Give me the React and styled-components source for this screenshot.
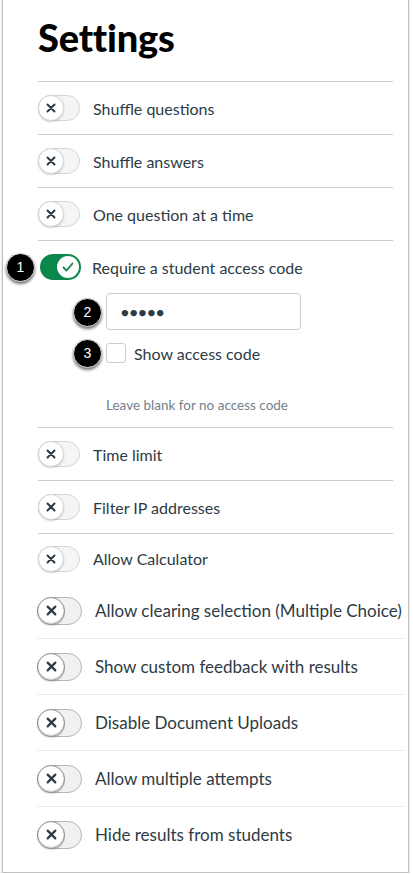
import styled, { createGlobalStyle } from 'styled-components';

const GlobalStyle = createGlobalStyle`
  html, body {
    margin: 0;
    padding: 0;
    background: #ffffff;
  }
  body {
    font-family: Lato, "Liberation Sans", sans-serif;
    color: #2d3b45;
  }
`;

// Outer card, the screenshot is cut off at the top so there is no top border.
const Panel = styled.div`
  width: 407px;
  margin: 0 2px;
  padding: 0 0 10px 35px;
  box-sizing: border-box;
  background: #fff;
  border: 1px solid #c2c2c2;
  border-top: none;
  box-shadow: 0 1px 2px rgba(0, 0, 0, 0.25);
`;

const Title = styled.h1`
  margin: 0;
  padding: 11px 0 18px;
  font-size: 38px;
  line-height: 52px;
  font-weight: 900;
  color: #000;
  letter-spacing: -0.2px;
`;

const Section = styled.div`
  margin-right: ${({ $wide }) => ($wide ? '3px' : '15px')};
  margin-left: ${({ $wide }) => ($wide ? '-1px' : '0')};
  border-top: ${({ $wide }) => ($wide ? 'none' : '1px solid #c7cdd1')};
`;

const Row = styled.div`
  display: flex;
  align-items: center;
  gap: ${({ $indent }) => ($indent ? 11 : 13)}px;
  height: ${({ $h }) => $h}px;
  padding-left: ${({ $indent }) => $indent || 0}px;
  border-bottom: ${({ $line }) => $line || 'none'};
  font-size: ${({ $wide }) => ($wide ? '17px' : '16px')};
`;

const Label = styled.span`
  white-space: nowrap;
`;

const Block = styled.div`
  border-bottom: 1px solid #c7cdd1;
`;

const Sub = styled.div`
  padding: 0 0 14px 68px;
`;

// Wraps a control so its numbered callout can sit over the left side.
const Anchor = styled.div`
  position: relative;
  flex: none;
  width: fit-content;
`;

const Badge = styled.span`
  position: absolute;
  top: 50%;
  left: ${({ $left }) => $left}px;
  width: 29px;
  height: 29px;
  margin-top: -14px;
  border-radius: 50%;
  background: #000;
  color: #fff;
  font-family: "Liberation Sans", Arial, sans-serif;
  font-size: 14px;
  line-height: 27px;
  text-align: center;
  box-shadow: 0 2px 3px rgba(0, 0, 0, 0.55);
  border: 1px solid #e0e0e0;
  box-sizing: border-box;
`;

const Track = styled.span`
  display: flex;
  flex: none;
  align-items: center;
  box-sizing: border-box;
  width: ${({ $big }) => ($big ? 45 : 42)}px;
  height: ${({ $big }) => ($big ? 28 : 26)}px;
  border-radius: 14px;
  border: 1px solid ${({ $big }) => ($big ? '#b6b6b6' : '#d3d7da')};
  background: ${({ $big }) => ($big ? '#f1f1f1' : '#f5f5f5')};
`;

const Knob = styled.span`
  display: flex;
  flex: none;
  align-items: center;
  justify-content: center;
  box-sizing: border-box;
  width: ${({ $big }) => ($big ? 28 : 26)}px;
  height: ${({ $big }) => ($big ? 28 : 26)}px;
  margin: -1px;
  border-radius: 50%;
  background: #fff;
  border: ${({ $big }) => ($big ? '1.5px solid #8e8e8e' : '1px solid #d3d7da')};
  box-shadow: ${({ $big }) =>
    $big ? 'inset 0 -1px 2px rgba(0,0,0,0.2), 0 1px 1px rgba(0,0,0,0.15)' : '0 1px 2px rgba(0,0,0,0.18)'};
`;

const OnTrack = styled.span`
  display: flex;
  align-items: center;
  justify-content: flex-end;
  box-sizing: border-box;
  width: 41px;
  height: 26px;
  padding: 2px;
  border-radius: 13px;
  background: #0b874b;
`;

const OnKnob = styled.span`
  display: flex;
  align-items: center;
  justify-content: center;
  width: 22px;
  height: 22px;
  border-radius: 50%;
  background: #fff;
`;

const Input = styled.div`
  display: flex;
  align-items: center;
  box-sizing: border-box;
  width: 195px;
  height: 37px;
  padding-left: 14px;
  border: 1px solid #c7cdd1;
  border-radius: 4px;
  font-size: 13px;
  letter-spacing: 1px;
  color: #2d3b45;
`;

const CheckRow = styled.div`
  display: flex;
  align-items: center;
  gap: 8px;
  margin-top: 13px;
  height: 20px;
  font-size: 16px;
`;

const Box = styled.span`
  display: block;
  width: 20px;
  height: 20px;
  box-sizing: border-box;
  border: 1px solid #c7cdd1;
  border-radius: 3px;
  background: #fff;
`;

const Hint = styled.div`
  margin-top: 34px;
  font-size: 13.5px;
  line-height: 16px;
  color: #73818c;
`;

const XIcon = ({ size = 10 }) => (
  <svg width={size} height={size} viewBox="0 0 10 10">
    <path d="M1.5 1.5 L8.5 8.5 M8.5 1.5 L1.5 8.5" stroke="#2d3b45" strokeWidth="2" strokeLinecap="round" />
  </svg>
);

const Toggle = ({ big }) => (
  <Track $big={big}>
    <Knob $big={big}>
      <XIcon size={big ? 11 : 10} />
    </Knob>
  </Track>
);

const first = ['Shuffle questions', 'Shuffle answers', 'One question at a time'];
const middle = ['Time limit', 'Filter IP addresses', 'Allow Calculator'];
const second = [
  'Allow clearing selection (Multiple Choice)',
  'Show custom feedback with results',
  'Disable Document Uploads',
  'Allow multiple attempts',
  'Hide results from students',
];

export default function App() {
  return (
    <>
      <GlobalStyle />
      <Panel>
        <Title>Settings</Title>
        <Section>
          {first.map((t) => (
            <Row key={t} $h={52} $line="1px solid #c7cdd1">
              <Toggle />
              <Label>{t}</Label>
            </Row>
          ))}
          <Block>
            <Row $h={52} $indent={2}>
              <Anchor>
                <Badge $left={-34}>1</Badge>
                <OnTrack>
                  <OnKnob>
                    <svg width="12" height="12" viewBox="0 0 12 12">
                      <path d="M1.5 6.5 L4.5 9.5 L10.5 2.5" fill="none" stroke="#0b874b" strokeWidth="1.8" strokeLinecap="round" strokeLinejoin="round" />
                    </svg>
                  </OnKnob>
                </OnTrack>
              </Anchor>
              <Label>Require a student access code</Label>
            </Row>
            <Sub>
              <Anchor>
                <Badge $left={-33}>2</Badge>
                <Input>●●●●●</Input>
              </Anchor>
              <CheckRow>
                <Anchor>
                  <Badge $left={-33}>3</Badge>
                  <Box />
                </Anchor>
                <Label>Show access code</Label>
              </CheckRow>
              <Hint>Leave blank for no access code</Hint>
            </Sub>
          </Block>
          {middle.map((t, i) => (
            <Row key={t} $h={i === 2 ? 49 : 52} $line={i === 2 ? 'none' : '1px solid #c7cdd1'}>
              <Toggle />
              <Label>{t}</Label>
            </Row>
          ))}
        </Section>
        <Section $wide>
          {second.map((t, i) => (
            <Row
              key={t}
              $wide
              $h={55}
              $line={i === second.length - 1 ? 'none' : '1px solid #ebebeb'}
            >
              <Toggle big />
              <Label>{t}</Label>
            </Row>
          ))}
        </Section>
      </Panel>
    </>
  );
}
